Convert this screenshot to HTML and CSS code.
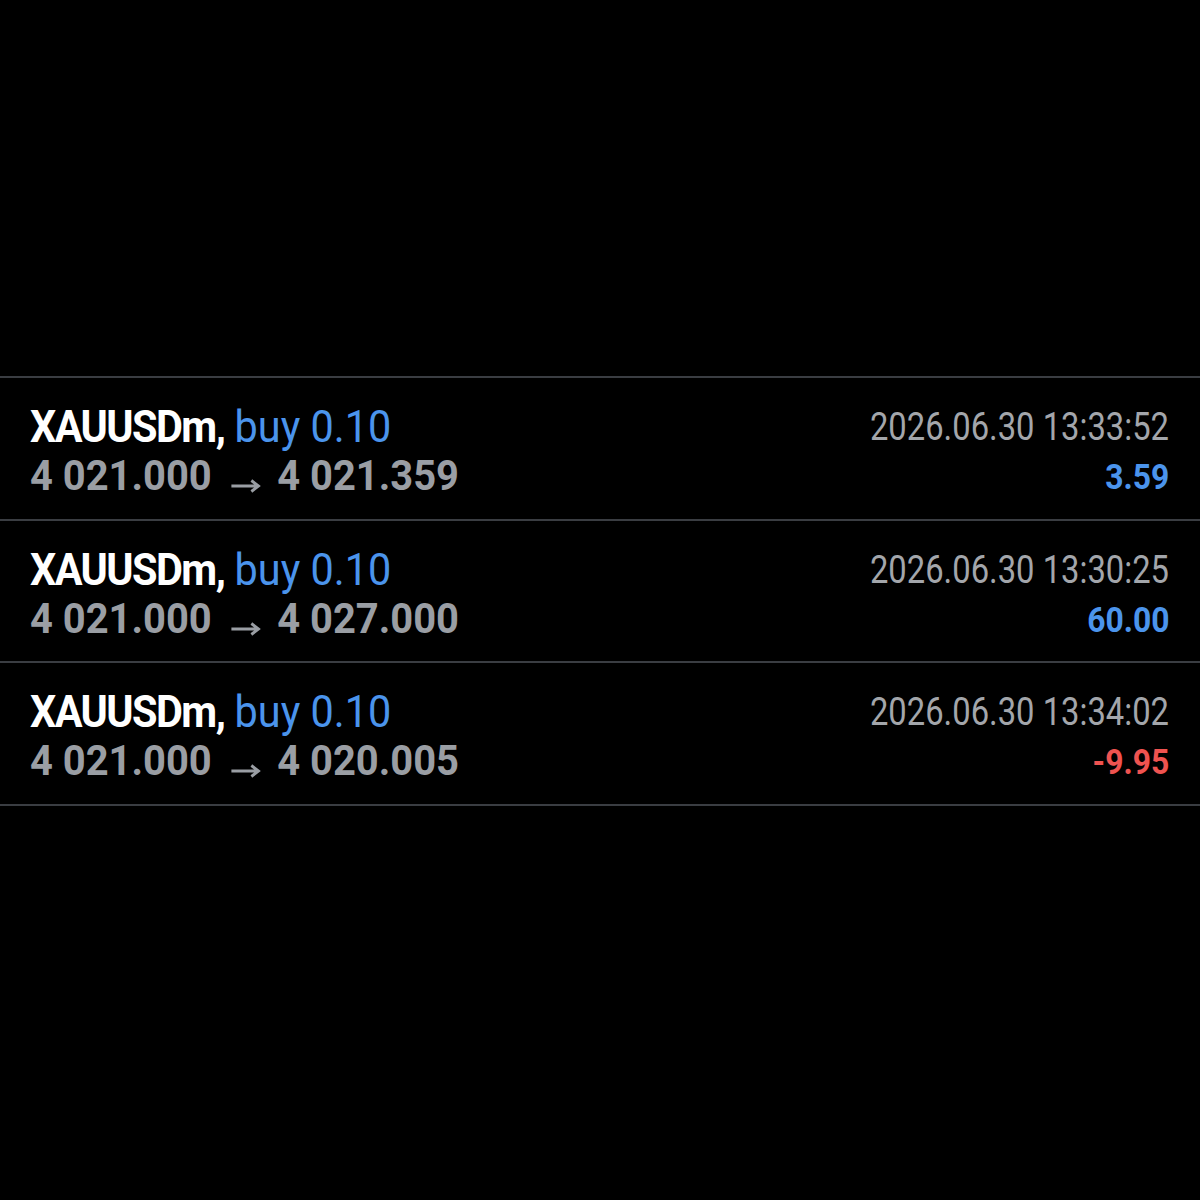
FILE: index.html
```html
<!DOCTYPE html>
<html>
<head>
  <title>Closed trades</title>
  <link rel="stylesheet" href="styles.css">
</head>
<body>
  <div class="history">
    <div class="trade">
      <div class="left">
        <div class="title"><span class="cond"><b>XAUUSDm,</b> <span class="side">buy 0.10</span></span></div>
        <div class="prices"><span class="cond">4 021.000<svg class="arrow" width="32" height="14" viewBox="0 0 32 14"><path d="M1 7H29M22 1.5L29.5 7L22 12.5" fill="none" stroke="currentColor" stroke-width="3"/></svg>4 021.359</span></div>
      </div>
      <div class="right">
        <div class="time"><span class="cond">2026.06.30 13:33:52</span></div>
        <div class="profit up"><span class="cond">3.59</span></div>
      </div>
    </div>
    <div class="trade">
      <div class="left">
        <div class="title"><span class="cond"><b>XAUUSDm,</b> <span class="side">buy 0.10</span></span></div>
        <div class="prices"><span class="cond">4 021.000<svg class="arrow" width="32" height="14" viewBox="0 0 32 14"><path d="M1 7H29M22 1.5L29.5 7L22 12.5" fill="none" stroke="currentColor" stroke-width="3"/></svg>4 027.000</span></div>
      </div>
      <div class="right">
        <div class="time"><span class="cond">2026.06.30 13:30:25</span></div>
        <div class="profit up"><span class="cond">60.00</span></div>
      </div>
    </div>
    <div class="trade">
      <div class="left">
        <div class="title"><span class="cond"><b>XAUUSDm,</b> <span class="side">buy 0.10</span></span></div>
        <div class="prices"><span class="cond">4 021.000<svg class="arrow" width="32" height="14" viewBox="0 0 32 14"><path d="M1 7H29M22 1.5L29.5 7L22 12.5" fill="none" stroke="currentColor" stroke-width="3"/></svg>4 020.005</span></div>
      </div>
      <div class="right">
        <div class="time"><span class="cond">2026.06.30 13:34:02</span></div>
        <div class="profit down"><span class="cond">-9.95</span></div>
      </div>
    </div>
  </div>
</body>
</html>
```

FILE: styles.css
```css
html, body { background: #000; }
body { margin: 0; font-family: Roboto, "Liberation Sans", sans-serif; color: #fff; }
.history { margin-top: 376px; border-bottom: 2px solid #3a3d42; }
.trade {
  display: flex;
  justify-content: space-between;
  border-top: 2px solid #3a3d42;
  height: 142.5px;
  box-sizing: border-box;
  padding: 25px 31px 0 30px;
}
.left, .right { display: flex; flex-direction: column; }
.right { align-items: flex-end; }
.cond { display: inline-block; white-space: nowrap; transform-origin: left center; }
.right .cond { transform-origin: right center; }
.title { font-size: 45px; line-height: 48px; color: #fff; }
.title .cond { transform: scaleX(0.92); }
.title b { font-weight: 700; letter-spacing: -1.7px; }
.side { color: #4b94ec; font-weight: 400; }
.prices { font-size: 42px; line-height: 50px; font-weight: 700; color: #9a9ea4; }
.prices .cond { transform: scaleX(0.95); }
.arrow { margin: 0 17px 0 20px; vertical-align: -3px; }
.time { font-size: 39px; line-height: 48px; color: #a3a6ab; }
.time .cond { transform: scaleX(0.84); }
.profit { font-size: 35px; line-height: 54px; font-weight: 700; }
.profit .cond { transform: scaleX(0.91); }
.up { color: #4b94ec; }
.down { color: #ef5350; }
```
